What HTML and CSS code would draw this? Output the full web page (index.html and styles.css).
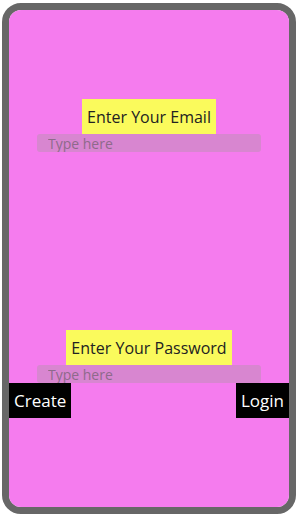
FILE: index.html
```html
<!DOCTYPE html>
<html lang="en">
<head>
    <meta charset="UTF-8">
    <title>Login</title>
    <link rel="stylesheet" href="styles.css">
</head>
<body>
<div class="phone">
    <div class="screen">
        <div class="field email-field">
            <label for="email" class="tag">Enter Your Email</label>
            <input type="text" id="email" placeholder="Type here">
        </div>
        <div class="field pass-field">
            <label for="pass" class="tag">Enter Your Password</label>
            <input type="password" id="pass" placeholder="Type here">
        </div>
        <div class="actions">
            <button class="btn">Create</button>
            <button class="btn">Login</button>
        </div>
    </div>
</div>
</body>
</html>
```

FILE: styles.css
```css
body {
    margin: 0;
    padding: 3px 4px 4px 2px;
    font-family: "Open Sans", "Noto Sans", sans-serif;
}

.phone {
    width: 280px;
    height: 497px;
    border: 7px solid #676767;
    border-radius: 19px;
    overflow: hidden;
}

.screen {
    height: 100%;
    background-color: #f57cee;
    display: flex;
    flex-direction: column;
    padding-top: 89px;
    box-sizing: border-box;
}

.field {
    display: flex;
    flex-direction: column;
    align-items: center;
}

.pass-field {
    margin-top: 178px;
}

.tag {
    display: block;
    background-color: #fafa5c;
    color: #222222;
    font-size: 16px;
    height: 35px;
    line-height: 36px;
    padding: 0 5px;
}

input {
    width: 224px;
    height: 18px;
    box-sizing: border-box;
    border: none;
    border-radius: 3px;
    background-color: #d886d0;
    outline: none;
    padding: 0 11px;
    font-family: "Open Sans", "Noto Sans", sans-serif;
    font-size: 14px;
    color: #333333;
}

input::placeholder {
    color: #8e6a8b;
}

.actions {
    display: flex;
    justify-content: space-between;
}

.btn {
    height: 35px;
    border: none;
    background-color: #000000;
    color: #ffffff;
    font-family: "Open Sans", "Noto Sans", sans-serif;
    font-size: 17px;
    padding: 0 5px;
}
```
